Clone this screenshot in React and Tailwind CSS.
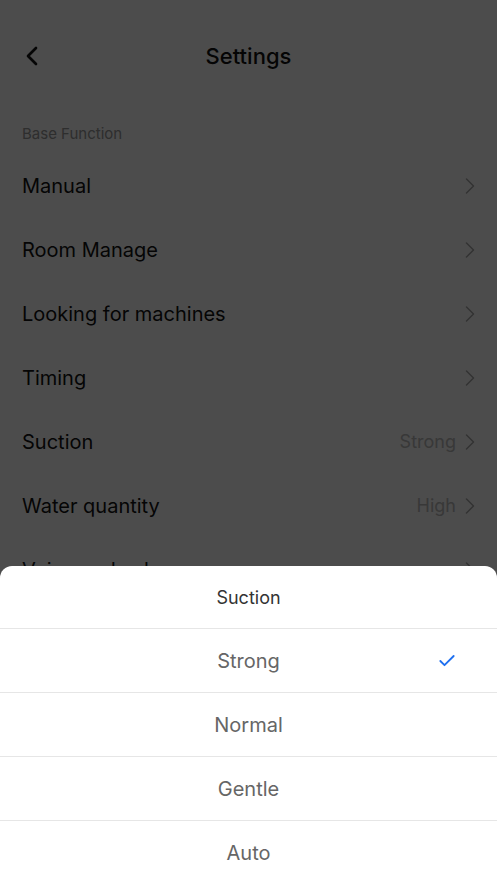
import { ChevronLeft, ChevronRight, Check } from "lucide-react";

const rows = [
  { label: "Manual" },
  { label: "Room Manage" },
  { label: "Looking for machines" },
  { label: "Timing" },
  { label: "Suction", value: "Strong" },
  { label: "Water quantity", value: "High" },
  { label: "Voice and volume" },
  { label: "Do not disturb" },
];

const options = ["Strong", "Normal", "Gentle", "Auto"];

const App = () => {
  const selected = "Strong";

  return (
    <div className="relative h-[883px] w-full overflow-hidden bg-white font-['Inter','Noto_Sans',sans-serif]">
      <header className="flex h-[112px] items-center px-4">
        <div className="flex w-10 items-center">
          <ChevronLeft className="h-8 w-8 text-[#111]" strokeWidth={2} />
        </div>
        <h1 className="flex-1 pt-px text-center text-[22px] font-medium text-[#111]">Settings</h1>
        <div className="w-10" />
      </header>

      <section>
        <p className="px-[22px] pt-[11px] pb-[8px] text-[15px] text-[#999]">Base Function</p>
        {rows.map((row) => (
          <div key={row.label} className="flex h-16 items-center justify-between pl-[22px] pr-[13px]">
            <span className="text-[20px] text-[#111]">{row.label}</span>
            <span className="flex items-center text-[18px] text-[#bbb]">
              {row.value}
              <ChevronRight className="h-7 w-7 text-[#aaa]" strokeWidth={1.3} />
            </span>
          </div>
        ))}
      </section>

      <div className="absolute inset-0 bg-black/70" />

      <div className="absolute inset-x-0 bottom-0 rounded-t-[12px] bg-white">
        <div className="flex h-[63px] items-center justify-center border-b border-[#e6e6e6] text-[18px] text-[#333]">
          Suction
        </div>
        {options.map((opt, i) => (
          <div
            key={opt}
            className={`relative flex items-center justify-center pt-px text-[20px] text-[#666] ${i < options.length - 1 ? "h-16 border-b border-[#e6e6e6]" : "h-[62px]"}`}
          >
            {opt}
            {opt === selected && <Check className="absolute right-10 h-5 w-5 text-[#1e6ff0]" strokeWidth={2.2} />}
          </div>
        ))}
      </div>
    </div>
  );
};

export default App;
